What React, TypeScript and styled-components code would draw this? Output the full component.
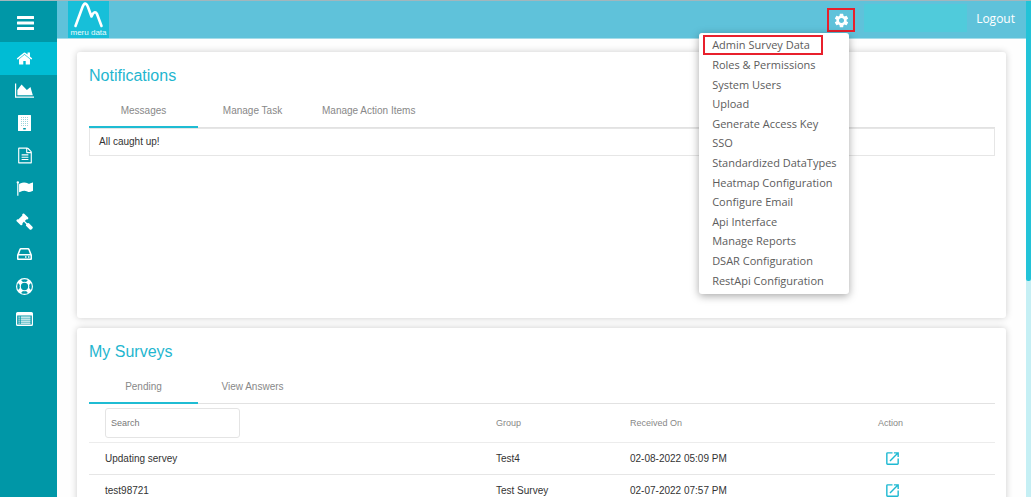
import React from "react";
import styled, { createGlobalStyle } from "styled-components";
import { MdOpenInNew, MdSettings } from "react-icons/md";

const Global = createGlobalStyle`
  * { box-sizing: border-box; }
  body { margin: 0; background: #fefefe; font-family: "Liberation Sans", Arial, sans-serif; font-size: 10px; color: #333; }
  button, input { font: inherit; }
`;

const Shell = styled.div`
  display: flex;
  height: 100vh;
  overflow: hidden;
  border-top: 1px solid #a3b6bc;
`;

const Sidebar = styled.aside`
  flex: 0 0 57px;
  background: #0097a7;
`;

const Toggle = styled.button`
  display: flex;
  align-items: center;
  justify-content: center;
  width: 100%;
  height: 41px;
  padding: 3px 6px 0 0;
  border: 0;
  background: none;
  color: #fff;
`;

const Nav = styled.nav`
  display: grid;
  grid-auto-rows: 1fr;
  height: 293px;
`;

const NavLink = styled.a<{ $active?: boolean }>`
  display: flex;
  align-items: center;
  justify-content: center;
  padding-right: 8px;
  color: #fff;
  background: ${(p) => (p.$active ? "#00bcd4" : "transparent")};
`;

const Page = styled.div`
  flex: 1;
  min-width: 0;
  display: flex;
  flex-direction: column;
`;

const Header = styled.header`
  flex: 0 0 38px;
  display: flex;
  align-items: flex-start;
  padding: 0 11px;
  background: #5fc2da;
  border-bottom: 1px solid #a5dce9;
`;

const Logo = styled.a`
  display: flex;
  flex-direction: column;
  align-items: center;
  width: 41px;
  height: 37px;
  margin-right: auto;
  background: #17bfd9;
  color: #e9fafd;
  font-size: 8px;
  line-height: 8px;
  text-decoration: none;
  white-space: nowrap;
`;

const Settings = styled.div`
  position: relative;
  margin: 7px 9px 0 0;
`;

const GearButton = styled.button`
  display: flex;
  align-items: center;
  justify-content: center;
  width: 28px;
  height: 24px;
  padding: 0;
  border: 2px solid #e8202c;
  background: none;
  color: #fff;
`;

const Menu = styled.ul`
  position: absolute;
  z-index: 2;
  top: 25px;
  right: 6px;
  display: grid;
  grid-auto-rows: 1fr;
  width: 150px;
  height: 261px;
  margin: 0;
  padding: 2px 4px 4px;
  list-style: none;
  background: #fff;
  border-radius: 3px;
  box-shadow: 0 2px 8px rgba(0, 0, 0, 0.35);
`;

const MenuLink = styled.a<{ $marked?: boolean }>`
  display: flex;
  align-items: center;
  width: 120px;
  height: 100%;
  padding-left: 9px;
  font-family: "Open Sans", sans-serif;
  font-size: 11px;
  color: #5c5c5c;
  text-decoration: none;
  white-space: nowrap;
  outline: ${(p) => (p.$marked ? "2px solid #e8202c" : "none")};
  outline-offset: -2px;
`;

const Account = styled.div`
  width: 103px;
  height: 28px;
  margin: 3px 9px 0 0;
  background: #50cbdb;
`;

const Logout = styled.a`
  padding-top: 9px;
  font-family: "Open Sans", sans-serif;
  font-size: 12px;
  line-height: 18px;
  color: #fff;
  text-decoration: none;
`;

const Main = styled.main`
  flex: 1;
  min-height: 0;
  overflow: hidden;
  display: flex;
  flex-direction: column;
  gap: 10px;
  padding: 13px 20px 0;
`;

const Card = styled.section`
  flex: none;
  min-height: 266px;
  padding: 14px 11px 14px 12px;
  background: #fff;
  border-radius: 3px;
  box-shadow: 0 0 7px rgba(0, 0, 0, 0.2);
`;

const Title = styled.h2`
  margin: 0;
  font-size: 16px;
  font-weight: normal;
  line-height: 20px;
  color: #1fb6cf;
`;

const Tabs = styled.div`
  display: flex;
  height: 42px;
  border-bottom: 1px solid #e2e2e2;
`;

const Tab = styled.button<{ $active?: boolean }>`
  min-width: 109px;
  height: 42px;
  padding: 8px 15px 0;
  border: 0;
  border-bottom: 2px solid ${(p) => (p.$active ? "#1fbcd3" : "transparent")};
  background: none;
  color: #888;
`;

const Message = styled.p`
  margin: 0;
  padding: 5px 9px;
  border: 1px solid #e6e6e6;
  line-height: 16px;
`;

const Table = styled.table`
  width: 100%;
  border-collapse: collapse;
  table-layout: fixed;
`;

const HeadCell = styled.th`
  height: 38px;
  padding: 0;
  border-bottom: 1px solid #ececec;
  font-size: 9px;
  font-weight: normal;
  text-align: left;
  color: #888;
  &:first-child { padding-left: 16px; width: 407px; }
  &:nth-child(2) { width: 134px; }
  &:nth-child(3) { width: 248px; }
`;

const Cell = styled.td`
  height: 32px;
  padding: 0;
  border-bottom: 1px solid #e6e6e6;
  &:first-child { padding-left: 16px; }
  &:last-child { padding-left: 6px; }
`;

const Search = styled.input`
  display: block;
  width: 135px;
  height: 30px;
  padding: 0 5px;
  border: 1px solid #e4e4e4;
  border-radius: 3px;
  background: #fff;
  &::placeholder { color: #777; opacity: 1; }
`;

const OpenLink = styled.a`
  display: flex;
  color: #1fb9d2;
`;

const ScrollTrack = styled.div`
  flex: 0 0 5px;
  background: #c5eff4;
`;

const ScrollThumb = styled.div`
  height: 280px;
  background: #22c3d8;
  border-radius: 0 0 2px 2px;
`;

type Glyph = { d: string; box?: string; w?: number; h?: number };

const Icon = ({ d, box = "0 0 1792 1792", w = 17, h = 17 }: Glyph) => (
  <svg width={w} height={h} viewBox={box} fill="currentColor" fillRule="evenodd" aria-hidden="true">
    <path d={d} />
  </svg>
);

const nav: (Glyph & { label: string })[] = [
  { label: "Home", d: "M1472 992v480q0 26-19 45t-45 19h-384v-384h-256v384h-384q-26 0-45-19t-19-45v-480q0-1 .5-3t.5-3l575-474 575 474q1 2 1 6zm223-69l-62 74q-8 9-21 11h-3q-13 0-21-7l-692-577-692 577q-12 8-24 7-13-2-21-11l-62-74q-8-10-7-23.5t11-21.5l719-599q32-26 76-26t76 26l244 204v-195q0-14 9-23t23-9h192q14 0 23 9t9 23v408l219 182q10 8 11 21.5t-7 23.5z" },
  { label: "Charts", w: 19, box: "0 0 2048 1792", d: "M2048 1536v128h-2048v-1536h128v1408h1920zm-384-1024l256 896h-1664v-576l448-576 576 576z" },
  { label: "Organization", w: 13, h: 16, box: "0 0 13 16", d: "M.5 0h12q.5 0 .5.500v15q0 .5-.5.500H.500Q0 16 0 15.500V.500Q0 0 .5 0zM3 2.500v.6h.8v-.6zm2 0v.6h.8v-.6zm2 0v.6h.8v-.6zm2 0v.6h.8v-.6zM3 4.500v.6h.8v-.6zm2 0v.6h.8v-.6zm2 0v.6h.8v-.6zm2 0v.6h.8v-.6zM3 6.500v.6h.8v-.6zm2 0v.6h.8v-.6zm2 0v.6h.8v-.6zm2 0v.6h.8v-.6zM3 8.500v.6h.8v-.6zm2 0v.6h.8v-.6zm2 0v.6h.8v-.6zm2 0v.6h.8v-.6zM3 10.500v.6h.8v-.6zm2 0v.6h.8v-.6zm2 0v.6h.8v-.6zm2 0v.6h.8v-.6zM5.200 13v1.500h2.600V13z" },
  { label: "Documents", w: 16, d: "M1596 380q28 28 48 76t20 88v1152q0 40-28 68t-68 28h-1344q-40 0-68-28t-28-68v-1600q0-40 28-68t68-28h896q40 0 88 20t76 48zm-444-244v376h376q-10-29-22-41l-313-313q-12-12-41-22zm384 1528v-1024h-416q-40 0-68-28t-28-68v-416h-768v1536h1280zm-1024-864q0-14 9-23t23-9h704q14 0 23 9t9 23v64q0 14-9 23t-23 9h-704q-14 0-23-9t-9-23v-64zm736 224q14 0 23 9t9 23v64q0 14-9 23t-23 9h-704q-14 0-23-9t-9-23v-64q0-14 9-23t23-9h704zm0 256q14 0 23 9t9 23v64q0 14-9 23t-23 9h-704q-14 0-23-9t-9-23v-64q0-14 9-23t23-9h704z" },
  { label: "Flags", d: "M320 256q0 72-64 110v1266q0 13-9.500 22.500t-22.500 9.500h-64q-13 0-22.500-9.500t-9.500-22.500v-1266q-64-38-64-110 0-53 37.500-90.500t90.500-37.500 90.500 37.500 37.500 90.500zm1472 64v763q0 25-12.500 38.500t-39.500 27.500q-215 116-369 116-61 0-123.500-22t-108.500-48-115.500-48-142.500-22q-192 0-464 146-17 9-33 9-26 0-45-19t-19-45v-742q0-32 31-55 21-14 79-43 236-120 421-120 107 0 200 29t219 88q38 19 88 19 54 0 117.500-21t110-47 88-47 54.500-21q26 0 45 19t19 45z" },
  { label: "Legal", d: "M1771 1536q0 53-37 90l-107 108q-39 37-91 37-53 0-90-37l-363-364q-38-36-38-90 0-53 43-96l-256-256-126 126q-14 14-34 14t-34-14q2 2 12.500 12t12.500 13 10 11.500 10 13.500 6 13.500 5.500 16.500 1.500 18q0 38-28 68-3 3-16.500 18t-19 20.500-18.500 16.500-22 15.500-22 9-26 4.500q-40 0-68-28l-408-408q-28-28-28-68 0-13 4.500-26t9-22 15.500-22 16.500-18.500 20.500-19 18-16.500q30-28 68-28 10 0 18 1.500t16.500 5.500 13.500 6 13.500 10 11.500 10 13 12.500 12 12.500q-14-14-14-34t14-34l348-348q14-14 34-14t34 14q-2-2-12.500-12t-12.500-13-10-11.500-10-13.500-6-13.500-5.500-16.500-1.500-18q0-38 28-68 3-3 16.500-18t19-20.500 18.500-16.500 22-15.500 22-9 26-4.500q40 0 68 28l408 408q28 28 28 68 0 13-4.500 26t-9 22-15.500 22-16.500 18.500-20.500 19-18 16.500q-30 28-68 28-10 0-18-1.500t-16.500-5.500-13.500-6-13.500-10-11.500-10-13-12.500-12-12.500q14 14 14 34t-14 34l-126 126 256 256q43-43 96-43 52 0 91 37l363 363q37 39 37 91z" },
  { label: "Storage", w: 15, h: 12, box: "0 0 15 12", d: "M4 0h7q1.300 0 1.700 1.200L15 7v4q0 1-1 1H1q-1 0-1-1V7l2.300-5.800Q2.700 0 4 0zm.3 1.500q-.5 0-.7.5L2.100 6h10.800l-1.500-4q-.2-.5-.7-.5zM1.500 7.500v3h12v-3zM8 8.300h1.500v1.500H8zm3 0h1.500v1.500H11z" },
  { label: "Support", d: "M896 0a896 896 0 1 0 0 1792a896 896 0 1 0 0-1792zM896 128q190 0 361 90l-194 194q-82-28-167-28t-167 28l-194-194q171-90 361-90zM218 1257q-90-171-90-361t90-361l194 194q-28 82-28 167t28 167zM896 1664q-190 0-361-90l194-194q82 28 167 28t167-28l194 194q-171 90-361 90zM896 512a384 384 0 1 1 0 768a384 384 0 1 1 0-768zM1380 1063q28-82 28-167t-28-167l194-194q90 171 90 361t-90 361z" },
  { label: "Lists", w: 17, h: 14, box: "0 0 17 14", d: "M1.500 0h14Q17 0 17 1.500v11q0 1.500-1.500 1.500h-14Q0 14 0 12.500v-11Q0 0 1.500 0zM1.200 3.500v9h14.600v-9zM2.500 4.500h1.200v1.200H2.500zm2.200 0h9.800v1.200H4.700zM2.500 6.500h1.200v1.200H2.500zm2.200 0h9.800v1.200H4.700zM2.500 8.500h1.200v1.200H2.500zm2.200 0h9.800v1.200H4.700zM2.500 10.500h1.200v1.200H2.500zm2.200 0h9.800v1.200H4.700z" },
];

const menu = [
  "Admin Survey Data", "Roles & Permissions", "System Users", "Upload", "Generate Access Key", "SSO",
  "Standardized DataTypes", "Heatmap Configuration", "Configure Email", "Api Interface", "Manage Reports",
  "DSAR Configuration", "RestApi Configuration",
];

const surveys = [
  { name: "Updating servey", group: "Test4", received: "02-08-2022 05:09 PM" },
  { name: "test98721", group: "Test Survey", received: "02-07-2022 07:57 PM" },
];

export default function App() {
  return (
    <Shell>
      <Global />
      <Sidebar>
        <Toggle aria-label="Toggle navigation">
          <Icon w={17} h={14} box="0 0 17 14" d="M.5 0h16q.5 0 .5.500v2q0 .5-.5.500H.500Q0 3 0 2.500v-2Q0 0 .5 0zM.5 5.500h16q.5 0 .5.500v2q0 .5-.5.500H.500Q0 8.500 0 8V6q0-.5.500-.5zM.5 11h16q.5 0 .5.500v2q0 .5-.5.500H.500Q0 14 0 13.500v-2q0-.5.500-.5z" />
        </Toggle>
        <Nav>
          {nav.map(({ label, ...glyph }, i) => (
            <NavLink key={label} href="#" aria-label={label} $active={i === 0}>
              <Icon {...glyph} />
            </NavLink>
          ))}
        </Nav>
      </Sidebar>
      <Page>
        <Header>
          <Logo href="#">
            <svg width="41" height="28" viewBox="0 0 41 28" fill="none" stroke="#fff" strokeWidth="2.600" strokeLinecap="round" strokeLinejoin="round" aria-hidden="true">
              <path d="M7.500 25L14.500 6Q17 -.5 19.800 5.500L23.500 15.500Q26.500 8.500 29 13L33.500 25" />
            </svg>
            meru data
          </Logo>
          <Settings>
            <GearButton aria-label="Settings"><MdSettings size={17} /></GearButton>
            <Menu>
              {menu.map((item, i) => (
                <li key={item}><MenuLink href="#" $marked={i === 0}>{item}</MenuLink></li>
              ))}
            </Menu>
          </Settings>
          <Account />
          <Logout href="#">Logout</Logout>
        </Header>
        <Main>
          <Card>
            <Title>Notifications</Title>
            <Tabs>
              <Tab $active>Messages</Tab>
              <Tab>Manage Task</Tab>
              <Tab>Manage Action Items</Tab>
            </Tabs>
            <Message>All caught up!</Message>
          </Card>
          <Card>
            <Title>My Surveys</Title>
            <Tabs>
              <Tab $active>Pending</Tab>
              <Tab>View Answers</Tab>
            </Tabs>
            <Table>
              <thead>
                <tr>
                  <HeadCell><Search type="text" placeholder="Search" aria-label="Search" /></HeadCell>
                  <HeadCell>Group</HeadCell>
                  <HeadCell>Received On</HeadCell>
                  <HeadCell>Action</HeadCell>
                </tr>
              </thead>
              <tbody>
                {surveys.map((s) => (
                  <tr key={s.name}>
                    <Cell>{s.name}</Cell>
                    <Cell>{s.group}</Cell>
                    <Cell>{s.received}</Cell>
                    <Cell><OpenLink href="#" aria-label={`Open ${s.name}`}><MdOpenInNew size={17} /></OpenLink></Cell>
                  </tr>
                ))}
              </tbody>
            </Table>
          </Card>
        </Main>
      </Page>
      <ScrollTrack><ScrollThumb /></ScrollTrack>
    </Shell>
  );
}
